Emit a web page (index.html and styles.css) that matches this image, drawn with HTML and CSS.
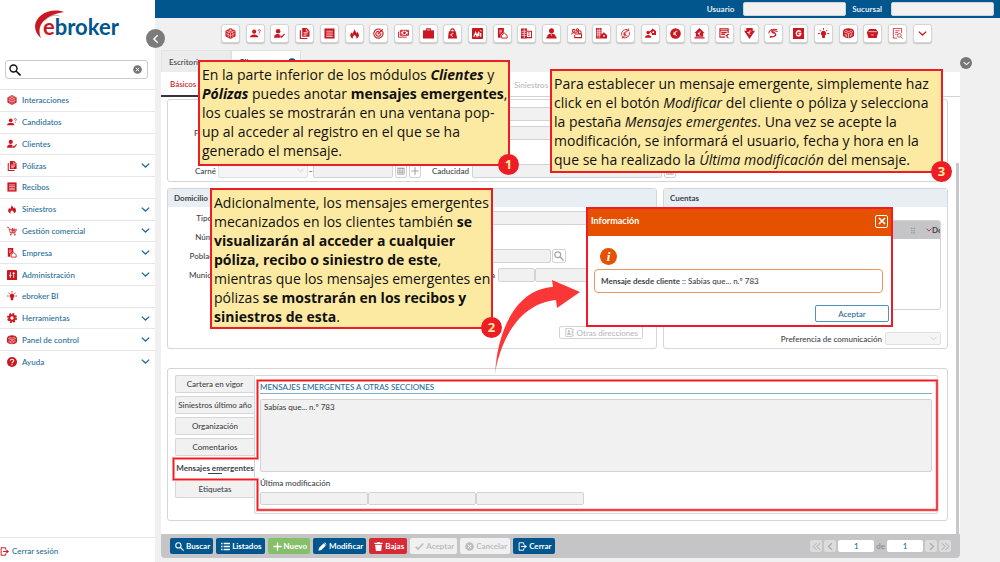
FILE: index.html
```html
<!DOCTYPE html>
<html lang="es">
<head>
<meta charset="utf-8">
<title>ebroker - Clientes</title>
<link rel="stylesheet" href="styles.css">
</head>
<body>
<svg class="sprite" aria-hidden="true">
  <defs>
    <symbol id="i-mesh" viewBox="0 0 24 24"><path fill="currentColor" d="M12 0l11 6v12l-11 6-11-6V6z"/><path fill="none" stroke="#fff" stroke-width="1.100" d="M2 6l10 5 10-5M12 11v12M7 3.500l10 5v12M17 3.500l-10 5v12M2 12l10 5 10-5M12 1v4"/></symbol>
    <symbol id="i-userq" viewBox="0 0 24 24"><circle cx="9" cy="8" r="4.500" fill="currentColor"/><path fill="currentColor" d="M0 20c0-8 18-8 18 0z"/><path fill="none" stroke="currentColor" stroke-width="1.800" d="M17.500 6.500c0-4 5-3.500 5-.5 0 2-2.500 2-2.500 4.500M20 12v2"/></symbol>
    <symbol id="i-usercheck" viewBox="0 0 24 24"><circle cx="9" cy="7" r="5" fill="currentColor"/><path fill="currentColor" d="M0 21c0-9 10-9 14-6l-2 2 3 4z"/><path fill="none" stroke="currentColor" stroke-width="2.600" d="M14 17l3 3 6-7"/></symbol>
    <symbol id="i-docs" viewBox="0 0 24 24"><path fill="currentColor" d="M7 0h10l6 6v13H7z"/><path fill="none" stroke="currentColor" stroke-width="2.500" d="M3 5v18h15"/><path fill="none" stroke="#fff" stroke-width="1.500" d="M10 10h9M10 13h9M10 16h6M16 2v5h5"/></symbol>
    <symbol id="i-receipt" viewBox="0 0 24 24"><path fill="currentColor" d="M1 1h22v22H1z"/><path stroke="#fff" stroke-width="1.500" d="M5 7h14M5 11h14M5 15h14M5 18.500h14"/></symbol>
    <symbol id="i-fire" viewBox="0 0 24 24"><path fill="currentColor" d="M11 1c1 5 5 6 5 10 1-1 2-2 2-3 6 7 4 13-2 15 1-4-1-6-4-8-3 2-5 5-3 8-7-2-8-9-3-14 0 2 1 3 2 3 1-4 4-6 3-11z"/></symbol>
    <symbol id="i-target" viewBox="0 0 24 24"><g fill="none" stroke="currentColor" stroke-width="2.400"><path d="M16 3A10 10 0 1 0 21 8"/><path d="M14 7.500A5.500 5.500 0 1 0 17 11"/><path d="M12 12l9-9M17 3v4h5"/></g><circle cx="12" cy="12" r="2" fill="currentColor"/></symbol>
    <symbol id="i-money" viewBox="0 0 24 24"><path fill="none" stroke="currentColor" stroke-width="2" d="M5 5h18v11H5zM1 8v12h18M9 5v3H5M19 5v3h4M9 16v-3H5M19 16v-3h4"/><circle cx="14" cy="10.500" r="3" fill="currentColor"/></symbol>
    <symbol id="i-case" viewBox="0 0 24 24"><path fill="currentColor" d="M0 5h24v18H0z"/><path fill="none" stroke="currentColor" stroke-width="2.500" d="M8 6V2h8v4"/></symbol>
    <symbol id="i-bag" viewBox="0 0 24 24"><path fill="currentColor" d="M4 7h15l3 16H2z"/><path fill="none" stroke="currentColor" stroke-width="2.500" d="M8 8c0-8 8-8 8 0"/><path fill="none" stroke="#fff" stroke-width="1.500" d="M14 12c-5-3-7 6-1 7M7 15h5"/></symbol>
    <symbol id="i-mi" viewBox="0 0 24 24"><rect x="0" y="0" width="24" height="24" rx="2" fill="currentColor"/><path fill="none" stroke="#fff" stroke-width="2.600" d="M4 19l4-9 3 8 4-10v10M19 11v8M18 6h3"/></symbol>
    <symbol id="i-dochome" viewBox="0 0 24 24"><path fill="currentColor" d="M2 0h13v10l-7 5v6H2z"/><path fill="#fff" stroke="currentColor" stroke-width="2" d="M10 16l6-5 6 5v6H10z"/><path stroke="#fff" stroke-width="1.300" d="M5 5h6M5 8h6M5 11h4"/></symbol>
    <symbol id="i-building" viewBox="0 0 24 24"><path fill="currentColor" d="M0 1h13v22H0z"/><path fill="none" stroke="currentColor" stroke-width="2.200" d="M12 7h11v14H12M15 11h4M15 16h4"/><path stroke="#fff" stroke-width="1.500" d="M1 7h11M1 11.500h11M1 16h11M7 2v20"/></symbol>
    <symbol id="i-desk" viewBox="0 0 24 24"><circle cx="12" cy="6" r="5.500" fill="currentColor"/><path fill="currentColor" d="M3 18c0-8 18-8 18 0v1h2v4H1v-4h2z"/><path stroke="#fff" stroke-width="1.200" d="M12 13v4"/></symbol>
    <symbol id="i-group" viewBox="0 0 24 24"><g fill="none" stroke="currentColor" stroke-width="2.200"><circle cx="6" cy="6" r="3"/><circle cx="14" cy="4" r="2.500"/><circle cx="19" cy="9" r="3"/><path d="M1 14c1-5 8-5 9 0M10 11c2-4 5-3 6-1M11 13h12v8H8v-6"/></g></symbol>
    <symbol id="i-bldhome" viewBox="0 0 24 24"><path fill="currentColor" d="M0 0h12v23H0zM11 15l6-6 7 6v8H11z"/><path stroke="#fff" stroke-width="1.400" d="M1 6h10M1 10.500h10M1 15h9M4 1v20M8 1v20"/><circle cx="17.500" cy="17" r="2" fill="#fff"/></symbol>
    <symbol id="i-cycle" viewBox="0 0 24 24"><g fill="none" stroke="currentColor" stroke-width="1.800"><path d="M4 17A10 10 0 0 1 19 5M20 8A10 10 0 0 1 5 20M19 1v5h-5M5 23v-4h5M16 8c-5-2-7 3-6 8M7 11h7M7 14h6M9 17h7"/></g></symbol>
    <symbol id="i-userhome" viewBox="0 0 24 24"><circle cx="7" cy="10" r="4" fill="currentColor"/><path fill="currentColor" d="M0 21c0-8 14-8 14 0zM10 8l7-7 7 6v8h-9c0-3-1-4-2-5z"/><circle cx="18" cy="9" r="2" fill="#fff"/></symbol>
    <symbol id="i-euro" viewBox="0 0 24 24"><circle cx="12" cy="12" r="11.500" fill="currentColor"/><path fill="none" stroke="#fff" stroke-width="2" d="M16 8c-5-4-9 7-1 9M7 11h6M7 14h5"/></symbol>
    <symbol id="i-homeeuro" viewBox="0 0 24 24"><path fill="currentColor" d="M12 0l11 11h-3v8H4v-8H1zM1 20h22v3H1z"/><path fill="none" stroke="#fff" stroke-width="1.600" d="M15 9c-5-3-7 6-1 8M8 12h5"/></symbol>
    <symbol id="i-list" viewBox="0 0 24 24"><path fill="none" stroke="currentColor" stroke-width="2.400" d="M13 20H2V2h18v9M2 6h18M5 10h12M5 14h8M22 14c-5-2-7 6-1 8M14 17h5"/></symbol>
    <symbol id="i-gem" viewBox="0 0 24 24"><path fill="currentColor" d="M5 0h14v6h5L12 24 0 6h5z"/><path fill="none" stroke="#fff" stroke-width="1.800" d="M16 7c-6-3-8 6-2 7M7 10h6"/></symbol>
    <symbol id="i-swirl" viewBox="0 0 24 24"><path fill="none" stroke="currentColor" stroke-width="2.200" d="M20 4C9 0 4 9 12 11s8 8-8 9M21 8C11 3 8 8 13 10c8 3 1 12-9 8M2 12c0-5 4-8 7-9"/></symbol>
    <symbol id="i-g" viewBox="0 0 24 24"><path fill="currentColor" d="M0 0h24v24H0z"/><path fill="none" stroke="#fff" stroke-width="3" d="M17 8c-6-5-12 2-9 7 3 4 9 2 9-3h-5"/></symbol>
    <symbol id="i-bulb" viewBox="0 0 24 24"><path fill="currentColor" d="M12 6a6 6 0 0 0-3 11v5h6v-5a6 6 0 0 0-3-11z"/><path stroke="currentColor" stroke-width="2" d="M12 0v4M4 4l2 3M20 4l-2 3M0 12h4M20 12h4"/></symbol>
    <symbol id="i-box" viewBox="0 0 24 24"><path fill="currentColor" d="M0 6c5-7 19-7 24 0v11c-5 7-19 7-24 0z"/><path fill="none" stroke="#fff" stroke-width="1.400" d="M2 8l10 4 10-4M12 12v10M5 5l7 3 7-3M5 13v5M8 14v6M16 14v5M19 12v5"/></symbol>
    <symbol id="i-drawer" viewBox="0 0 24 24"><path fill="currentColor" d="M5 2h14l5 6v3l-3 11H3L0 11V8z"/><path fill="none" stroke="#fff" stroke-width="1.500" d="M3 8h18M9 14c1 2 5 2 6 0"/></symbol>
    <symbol id="i-docsearch" viewBox="0 0 24 24"><g fill="none" stroke="currentColor" stroke-width="1.700"><path d="M11 22H3V1h18v10M7 6h10M7 10h6M7 14h3"/><circle cx="16" cy="16" r="4"/><path d="M19 19l4 4"/></g></symbol>
    <symbol id="i-down" viewBox="0 0 24 24"><path fill="none" stroke="currentColor" stroke-width="3.500" d="M2 7l10 9 10-9"/></symbol>
    <symbol id="i-left" viewBox="0 0 24 24"><path fill="none" stroke="currentColor" stroke-width="3.500" d="M16 3l-9 9 9 9"/></symbol>
    <symbol id="i-right" viewBox="0 0 24 24"><path fill="none" stroke="currentColor" stroke-width="3.500" d="M8 3l9 9-9 9"/></symbol>
    <symbol id="i-first" viewBox="0 0 24 24"><path fill="none" stroke="currentColor" stroke-width="2.500" d="M12 3l-9 9 9 9M22 3l-9 9 9 9"/></symbol>
    <symbol id="i-last" viewBox="0 0 24 24"><path fill="none" stroke="currentColor" stroke-width="2.500" d="M12 3l9 9-9 9M2 3l9 9-9 9"/></symbol>
    <symbol id="i-cart" viewBox="0 0 24 24"><path fill="none" stroke="currentColor" stroke-width="1.800" d="M0 3h4l4 14h12M6 8h17l-3 7H8M10 11h10M13 5v9M17 6v9"/><circle cx="9" cy="21" r="2" fill="currentColor"/><circle cx="19" cy="21" r="2" fill="currentColor"/></symbol>
    <symbol id="i-admin" viewBox="0 0 24 24"><rect x="0" y="0" width="24" height="24" rx="1" fill="currentColor"/><path fill="none" stroke="#fff" stroke-width="2" d="M8 5v14M16 5v14M5 13h6M13 8h6"/></symbol>
    <symbol id="i-gear" viewBox="0 0 24 24"><circle cx="12" cy="12" r="6.500" fill="none" stroke="currentColor" stroke-width="5"/><circle cx="12" cy="12" r="10" fill="none" stroke="currentColor" stroke-width="4" stroke-dasharray="4.500 3.350"/></symbol>
    <symbol id="i-help" viewBox="0 0 24 24"><circle cx="12" cy="12" r="12" fill="currentColor"/><path fill="none" stroke="#fff" stroke-width="2.500" d="M8 9c0-5 8-4 8 0 0 3-4 3-4 6M12 17v2.500"/></symbol>
    <symbol id="i-search" viewBox="0 0 24 24"><circle cx="9" cy="9" r="7" fill="none" stroke="currentColor" stroke-width="2.800"/><path stroke="currentColor" stroke-width="3.200" d="M14 14l9 9"/></symbol>
    <symbol id="i-xcircle" viewBox="0 0 24 24"><circle cx="12" cy="12" r="11.500" fill="currentColor"/><path stroke="#fff" stroke-width="2.600" d="M7.500 7.500l9 9M16.500 7.500l-9 9"/></symbol>
    <symbol id="i-exit" viewBox="0 0 24 24"><path fill="none" stroke="currentColor" stroke-width="2.500" d="M15 7V2H3v20h12v-5M8 12h11"/><path fill="currentColor" d="M17 6l7 6-7 6z"/></symbol>
    <symbol id="i-menu" viewBox="0 0 24 24"><path stroke="currentColor" stroke-width="4" d="M0 4h4M7 4h17M0 12h4M7 12h17M0 20h4M7 20h17"/></symbol>
    <symbol id="i-plus" viewBox="0 0 24 24"><path stroke="currentColor" stroke-width="3.500" d="M12 1v22M1 12h22"/></symbol>
    <symbol id="i-pencil" viewBox="0 0 24 24"><path fill="currentColor" d="M1 23l2-8L15 3l6 6L9 21zM16 2c2-2 8 3 6 6z"/></symbol>
    <symbol id="i-trash" viewBox="0 0 24 24"><path fill="currentColor" d="M1 2h7l1-2h6l1 2h7v3H1zM3 7h18l-2 17H5z"/></symbol>
    <symbol id="i-check" viewBox="0 0 24 24"><path fill="none" stroke="currentColor" stroke-width="4.500" d="M2 13l6 6L22 4"/></symbol>
    <symbol id="i-x" viewBox="0 0 24 24"><path stroke="currentColor" stroke-width="5" d="M3 3l18 18M21 3L3 21"/></symbol>
    <symbol id="i-cal" viewBox="0 0 24 24"><path fill="currentColor" d="M1 2h22v5H1z"/><path fill="none" stroke="currentColor" stroke-width="2" d="M2 6v16h20V6M2 12h20M2 17h20M7 8v14M12 8v14M17 8v14"/></symbol>
    <symbol id="i-book" viewBox="0 0 24 24"><path fill="none" stroke="currentColor" stroke-width="2" d="M2 1h17v22H2zM22 3v4M22 10v4M22 17v4"/><circle cx="10" cy="9" r="3" fill="currentColor"/><path fill="currentColor" d="M5 18c0-6 11-6 11 0z"/></symbol>
    <symbol id="i-dots" viewBox="0 0 24 24"><path stroke="currentColor" stroke-width="5" d="M4 3h6M14 3h6M4 12h6M14 12h6M4 21h6M14 21h6"/></symbol>
  </defs>
</svg>

<div class="app">
  <aside class="sidebar">
    <div class="logo">
      <svg class="swoosh" viewBox="0 0 32 30" aria-hidden="true"><path fill="#b9b5b0" d="M8 9C14 3 23 3 30 9c-5-4-14-5-20 2z"/><path fill="#cb1820" d="M29 2C15-3 1 5 0 16c0 5 2 9 6 12C1 17 8 5 29 2z"/></svg>
      <span class="brand"><span class="brand-e">e</span>broker</span>
    </div>
    <label class="search"><svg><use href="#i-search"/></svg><input type="text" aria-label="Buscar en el menú"><svg class="clear"><use href="#i-xcircle"/></svg></label>
    <nav class="menu">
      <a href="#"><svg><use href="#i-mesh"/></svg><span>Interacciones</span></a>
      <a href="#"><svg><use href="#i-userq"/></svg><span>Candidatos</span></a>
      <a href="#"><svg><use href="#i-usercheck"/></svg><span>Clientes</span></a>
      <a href="#"><svg><use href="#i-docs"/></svg><span>Pólizas</span><svg class="chev"><use href="#i-down"/></svg></a>
      <a href="#"><svg><use href="#i-receipt"/></svg><span>Recibos</span></a>
      <a href="#"><svg><use href="#i-fire"/></svg><span>Siniestros</span><svg class="chev"><use href="#i-down"/></svg></a>
      <a href="#"><svg><use href="#i-cart"/></svg><span>Gestión comercial</span><svg class="chev"><use href="#i-down"/></svg></a>
      <a href="#"><svg><use href="#i-dochome"/></svg><span>Empresa</span><svg class="chev"><use href="#i-down"/></svg></a>
      <a href="#"><svg><use href="#i-admin"/></svg><span>Administración</span><svg class="chev"><use href="#i-down"/></svg></a>
      <a href="#"><svg><use href="#i-bulb"/></svg><span>ebroker BI</span></a>
      <a href="#"><svg><use href="#i-gear"/></svg><span>Herramientas</span><svg class="chev"><use href="#i-down"/></svg></a>
      <a href="#"><svg><use href="#i-box"/></svg><span>Panel de control</span><svg class="chev"><use href="#i-down"/></svg></a>
      <a href="#"><svg><use href="#i-help"/></svg><span>Ayuda</span><svg class="chev"><use href="#i-down"/></svg></a>
    </nav>
    <a class="logout" href="#"><svg><use href="#i-exit"/></svg>Cerrar sesión</a>
    <button class="collapse" aria-label="Contraer menú"><svg><use href="#i-left"/></svg></button>
  </aside>

  <main class="main">
    <header class="topbar">
      <label for="usuario">Usuario</label><input id="usuario" type="text">
      <label for="sucursal">Sucursal</label><input id="sucursal" type="text">
    </header>
    <div class="toolbar">
      <button aria-label="Interacciones"><svg><use href="#i-mesh"/></svg></button>
      <button aria-label="Candidatos"><svg><use href="#i-userq"/></svg></button>
      <button aria-label="Clientes"><svg><use href="#i-usercheck"/></svg></button>
      <button aria-label="Pólizas"><svg><use href="#i-docs"/></svg></button>
      <button aria-label="Recibos"><svg><use href="#i-receipt"/></svg></button>
      <button aria-label="Siniestros"><svg><use href="#i-fire"/></svg></button>
      <button aria-label="Objetivos"><svg><use href="#i-target"/></svg></button>
      <button aria-label="Caja"><svg><use href="#i-money"/></svg></button>
      <button aria-label="Cartera"><svg><use href="#i-case"/></svg></button>
      <button aria-label="Compras"><svg><use href="#i-bag"/></svg></button>
      <button aria-label="Mi"><svg><use href="#i-mi"/></svg></button>
      <button aria-label="Empresa"><svg><use href="#i-dochome"/></svg></button>
      <button aria-label="Compañías"><svg><use href="#i-building"/></svg></button>
      <button aria-label="Colaboradores"><svg><use href="#i-desk"/></svg></button>
      <button aria-label="Grupos"><svg><use href="#i-group"/></svg></button>
      <button aria-label="Sucursales"><svg><use href="#i-bldhome"/></svg></button>
      <button aria-label="Liquidaciones"><svg><use href="#i-cycle"/></svg></button>
      <button aria-label="Comisiones"><svg><use href="#i-userhome"/></svg></button>
      <button aria-label="Cobros"><svg><use href="#i-euro"/></svg></button>
      <button aria-label="Pagos"><svg><use href="#i-homeeuro"/></svg></button>
      <button aria-label="Facturas"><svg><use href="#i-list"/></svg></button>
      <button aria-label="Gastos"><svg><use href="#i-gem"/></svg></button>
      <button aria-label="Suplementos"><svg><use href="#i-swirl"/></svg></button>
      <button aria-label="Gestor"><svg><use href="#i-g"/></svg></button>
      <button aria-label="ebroker BI"><svg><use href="#i-bulb"/></svg></button>
      <button aria-label="Panel de control"><svg><use href="#i-box"/></svg></button>
      <button aria-label="Archivo"><svg><use href="#i-drawer"/></svg></button>
      <button aria-label="Consultas"><svg><use href="#i-docsearch"/></svg></button>
      <button aria-label="Más"><svg><use href="#i-down"/></svg></button>
    </div>

    <div class="workspace">
      <div class="tabs">
        <button class="tab">Escritorio</button>
        <button class="tab tab-on">Clientes<svg><use href="#i-xcircle"/></svg></button>
      </div>
      <button class="expand" aria-label="Desplegar"><svg><use href="#i-down"/></svg></button>
      <div class="sheet">
        <div class="subtabs"><button class="subtab subtab-on">Básicos</button><button class="subtab subtab-off">Siniestros</button></div>
        <div class="content">
          <section class="card personal">
            <div class="row first"><input type="text" aria-label="Nombre" disabled></div>
            <div class="row"><label for="fnac">F. nac.</label><input id="fnac" type="text" disabled></div>
            <div class="row"></div>
            <div class="row">
              <label for="carne">Carné</label>
              <select id="carne" class="w-carne" disabled><option></option></select><span class="dash">–</span>
              <input class="w-date" type="text" aria-label="Fecha del carné" disabled>
              <button class="mini" aria-label="Calendario" disabled><svg><use href="#i-cal"/></svg></button>
              <button class="mini" aria-label="Añadir" disabled><svg><use href="#i-plus"/></svg></button>
              <label class="auto" for="cad">Caducidad</label><input id="cad" class="w-cad" type="text" disabled>
              <button class="mini" aria-label="Calendario de caducidad" disabled><svg><use href="#i-cal"/></svg></button>
            </div>
          </section>

          <div class="pair">
            <section class="card address">
              <h2>Domicilio</h2>
              <div class="fields">
                <div class="row"><label for="via">Tipo vía</label><input id="via" type="text" disabled></div>
                <div class="row"><label>Número</label></div>
                <div class="row"><label for="pob">Población</label><input id="pob" type="text" disabled><button class="mini look" aria-label="Buscar población" disabled><svg><use href="#i-search"/></svg></button></div>
                <div class="row"><label for="mun">Municipio</label><input id="mun" type="text" disabled><label class="auto" for="prov">Provincia</label><input id="prov" class="w-prov" type="text" disabled><input class="w-provname" type="text" aria-label="Nombre de provincia" disabled></div>
                <div class="row"><label>C.P.</label></div>
                <div class="row"><label>País</label></div>
                <div class="row end"><button class="other" disabled><svg><use href="#i-book"/></svg>Otras direcciones</button></div>
              </div>
            </section>
            <section class="card accounts">
              <h2>Cuentas</h2>
              <div class="grid-box">
                <div class="grid-head"><svg class="dots"><use href="#i-dots"/></svg><svg class="sort"><use href="#i-down"/></svg><span>Do</span></div>
              </div>
              <div class="pref"><label for="pref">Preferencia de comunicación</label><select id="pref" disabled><option></option></select></div>
            </section>
          </div>

          <section class="card lower">
            <div class="vtabs">
              <button>Cartera en vigor</button>
              <button>Siniestros último año</button>
              <button>Organización</button>
              <button>Comentarios</button>
              <button class="vtab-on">Mensajes emergentes</button>
              <button>Etiquetas</button>
            </div>
            <div class="pane">
              <h3>MENSAJES EMERGENTES A OTRAS SECCIONES</h3>
              <textarea aria-label="Mensaje emergente" readonly>Sabías que... n.º 783</textarea>
              <label for="ultima">Última modificación</label>
              <div class="mods"><input id="ultima" type="text" disabled><input type="text" aria-label="Fecha" disabled><input type="text" aria-label="Hora" disabled></div>
            </div>
          </section>
          <div class="scrollbar"></div>
        </div>
        <footer class="actions">
          <button class="blue"><svg><use href="#i-search"/></svg>Buscar</button>
          <button class="blue"><svg><use href="#i-menu"/></svg>Listados</button>
          <button class="green"><svg><use href="#i-plus"/></svg>Nuevo</button>
          <button class="blue"><svg><use href="#i-pencil"/></svg>Modificar</button>
          <button class="red"><svg><use href="#i-trash"/></svg>Bajas</button>
          <button class="off" disabled><svg><use href="#i-check"/></svg>Aceptar</button>
          <button class="off" disabled><svg><use href="#i-xcircle"/></svg>Cancelar</button>
          <button class="blue"><svg><use href="#i-exit"/></svg>Cerrar</button>
          <div class="pager">
            <button aria-label="Primero"><svg><use href="#i-first"/></svg></button>
            <button aria-label="Anterior"><svg><use href="#i-left"/></svg></button>
            <input type="text" value="1" aria-label="Registro"><span>de</span><input type="text" value="1" aria-label="Total">
            <button aria-label="Siguiente"><svg><use href="#i-right"/></svg></button>
            <button aria-label="Último"><svg><use href="#i-last"/></svg></button>
          </div>
        </footer>
      </div>
    </div>
  </main>

  <svg class="marks" width="1000" height="562" viewBox="0 0 1000 562" aria-hidden="true">
    <defs><linearGradient id="tail" x1="0" y1="0" x2="0" y2="1"><stop offset="0.800" stop-color="#fb3637"/><stop offset="1" stop-color="#fb3637" stop-opacity="0.500"/></linearGradient></defs>
    <path fill="none" stroke="#ffb3b3" stroke-width="3" d="M257.500 380.500H937V510H257.500V479.500H173.500V458.500H257.500Z"/>
    <path fill="none" stroke="#ee1c25" stroke-width="1.500" d="M257.500 380.500H937V510H257.500V479.500H173.500V458.500H257.500Z"/>
    <path fill="url(#tail)" d="M495 374C497 333 515 289 553 287L552 280L580 292L557 308L556 300C524 303 502 332 495 374Z"/>
  </svg>

  <div class="callout c1">En la parte inferior de los módulos <b><i>Clientes</i></b> y<br><b><i>Pólizas</i></b> puedes anotar <b>mensajes emergentes</b>,<br>los cuales se mostrarán en una ventana pop-<br>up al acceder al registro en el que se ha<br>generado el mensaje.<span class="badge">1</span></div>
  <div class="callout c2">Adicionalmente, los mensajes emergentes<br>mecanizados en los clientes también <b>se<br>visualizarán al acceder a cualquier<br>póliza, recibo o siniestro de este</b>,<br>mientras que los mensajes emergentes en<br>pólizas <b>se mostrarán en los recibos y<br>siniestros de esta</b>.<span class="badge">2</span></div>
  <div class="callout c3">Para establecer un mensaje emergente, simplemente haz<br>click en el botón <i>Modificar</i> del cliente o póliza y selecciona<br>la pestaña <i>Mensajes emergentes</i>. Una vez se acepte la<br>modificación, se informará el usuario, fecha y hora en la<br>que se ha realizado la <i>Última modificación</i> del mensaje.<span class="badge">3</span></div>

  <div class="modal" role="dialog" aria-labelledby="modal-title">
    <div class="modal-head"><span id="modal-title">Información</span><button aria-label="Cerrar"><svg><use href="#i-x"/></svg></button></div>
    <div class="modal-body">
      <span class="info">i</span>
      <p><b>Mensaje desde cliente</b> :: Sabías que... n.º 783</p>
      <button>Aceptar</button>
    </div>
  </div>
</div>
</body>
</html>
```
FILE: styles.css
```css
* { box-sizing: border-box; }

body {
  margin: 0;
  background: #f0f0f0;
  color: #3d4348;
  font: 500 8px/10px Lato, "Open Sans", sans-serif;
}

button, input, select, textarea { font: inherit; color: inherit; margin: 0; padding: 0; }
button { border: 0; background: none; }
a { text-decoration: none; }
.sprite { position: absolute; width: 0; height: 0; }

input, select, textarea {
  border: 1px solid #d3d3d5;
  border-radius: 2px;
  background: #f1f1f1;
  min-width: 0;
}

.app { position: relative; display: flex; min-height: 100vh; }

/* Sidebar */
.sidebar {
  position: relative;
  width: 155px;
  flex: none;
  display: flex;
  flex-direction: column;
  background: #fff;
}
.logo { display: flex; height: 60px; padding: 10px 0 0 35px; }
.swoosh { width: 32px; height: 30px; flex: none; }
.brand {
  margin: 4px 0 0 -24px;
  color: #00568d;
  font: 700 22px/26px Lato, sans-serif;
}
.brand-e { color: #cb1820; }
.search {
  display: flex;
  align-items: center;
  height: 19px;
  margin: 0 7px 10px 5px;
  padding: 0 5px 0 3px;
  border: 1px solid #ccc;
  border-radius: 3px;
  color: #111;
}
.search svg { width: 12px; height: 12px; flex: none; }
.search .clear { width: 9px; height: 9px; color: #777; }
.search input { flex: 1; border: 0; background: none; }
.menu { display: grid; grid-auto-rows: 1fr; height: 283px; }
.menu a {
  display: flex;
  align-items: center;
  gap: 5px;
  padding: 0 5px 0 7px;
  border-top: 1px solid #e6e6e6;
  color: #1f6c99;
}
.menu svg { width: 10px; height: 10px; color: #cb1820; }
.menu span { flex: 1; }
.menu .chev { width: 9px; height: 9px; color: #1f6c99; }
.logout {
  display: flex;
  align-items: center;
  gap: 3px;
  height: 25px;
  margin-top: auto;
  padding-top: 2px;
  border-top: 1px solid #e6e6e6;
  color: #1f6c99;
}
.logout svg { width: 9px; height: 9px; color: #cb1820; }
.collapse {
  position: absolute;
  top: 29px;
  right: -10px;
  display: grid;
  place-items: center;
  width: 19px;
  height: 19px;
  border-radius: 50%;
  background: #7b7b7b;
  color: #fff;
}
.collapse svg { width: 10px; height: 10px; }

/* Header */
.main { flex: 1; min-width: 0; display: flex; flex-direction: column; }
.topbar {
  display: flex;
  align-items: center;
  justify-content: flex-end;
  height: 18px;
  padding: 0 6px 1px;
  background: #00568d;
  color: #e3edf4;
  font-weight: 700;
}
.topbar input { width: 103px; height: 14px; margin-left: 9px; background: #f1f1f1; }
.topbar input + label { margin-left: 6px; }
.toolbar {
  display: flex;
  justify-content: space-between;
  height: 32px;
  padding: 6px 68px 0 66px;
}
.toolbar button {
  display: grid;
  place-items: center;
  width: 19px;
  height: 19px;
  border: 1px solid #d5d5d5;
  border-radius: 3px;
  background: #fff;
  box-shadow: 0 1px 1px #c4c4c4;
  color: #cb1820;
}
.toolbar svg { width: 11px; height: 11px; }
.toolbar button:last-child svg { width: 9px; height: 9px; }

/* Workspace */
.workspace {
  position: relative;
  flex: 1;
  display: flex;
  flex-direction: column;
  padding: 0 40px 4px 6px;
}
.tabs { display: flex; height: 22px; }
.tab { width: 70px; border: 1px solid #e2e2e2; border-bottom: 0; background: #ececec; text-align: left; padding-left: 7px; }
.tab-on { display: flex; align-items: center; justify-content: space-between; padding-right: 4px; background: #fff; font-weight: 700; }
.tab-on svg { width: 8px; height: 8px; color: #00568d; }
.expand {
  position: absolute;
  top: 7px;
  right: 28px;
  display: grid;
  place-items: center;
  width: 12px;
  height: 12px;
  border-radius: 50%;
  background: #777;
  color: #fff;
}
.expand svg { width: 7px; height: 7px; }
.sheet { flex: 1; display: flex; flex-direction: column; background: #fff; border-radius: 0 0 4px 4px; }
.subtabs { display: flex; height: 25px; border-bottom: 1px solid #d3d3d5; }
.subtab { padding: 0 9px; height: 25px; }
.subtab-on { width: 80px; text-align: left; border-bottom: 2px solid #33373b; color: #cb1820; }
.subtab-off { margin-left: 264px; color: #b9b9b9; }
.content { position: relative; flex: 1; padding: 2px 12px 13px 6px; }
.scrollbar { position: absolute; top: 66px; right: 1px; bottom: 0; width: 3px; background: #c8c8ca; }

.card { border: 1px solid #d6d6d8; border-radius: 3px; background: #fff; }
.card h2 { margin: 0; padding: 4px 6px; background: #e7eff4; font-size: 8px; line-height: 10px; font-weight: 700; }

.row { display: flex; align-items: center; height: 19px; }
.row label { flex: none; text-align: right; margin-right: 2px; }
.row label.auto { width: auto; margin-left: 11px; margin-right: 3px; }
.row input, .row select { height: 14px; }
.mini {
  display: grid;
  place-items: center;
  width: 12px;
  height: 14px;
  margin-left: 2px;
  border: 1px solid #d3d3d5;
  border-radius: 2px;
  color: #a5a5a5;
}
.mini svg { width: 8px; height: 8px; }

.personal { padding: 4px 0 1px; }
.personal .row label { width: 48px; }
.personal .row label.auto { width: auto; }
.personal .row > input:last-child { width: 444px; }
.personal .first { padding-left: 50px; }
.personal .w-carne { width: 90px; }
.personal .w-date { width: 80px; }
.personal .w-cad { width: 190px; }
.dash { width: 5px; text-align: center; }

select {
  appearance: none;
  background: #f1f1f1 url("data:image/svg+xml,%3Csvg xmlns='http://www.w3.org/2000/svg' viewBox='0 0 24 24'%3E%3Cpath fill='none' stroke='%23b5b5b5' stroke-width='3' d='M2 7l10 9 10-9'/%3E%3C/svg%3E") no-repeat right 3px center / 7px 7px;
}

.pair { display: grid; grid-template-columns: 490fr 285fr; gap: 6px; margin: 6px 0 19px; }
.pair .card { height: 161px; }
.address .fields { padding: 1px 13px 0 0; }
.address .row label { width: 56px; }
.address .row label.auto { width: auto; margin-left: 20px; }
.address .row input { flex: 1; }
.address .row:nth-child(3) { padding-right: 77px; }
.address .row input.w-prov { flex: none; width: 37px; }
.address .row input.w-provname { flex: none; width: 108px; }
.address .look { width: 14px; margin-left: 1px; }
.address .look svg { width: 10px; height: 10px; }
.address .row.end { justify-content: flex-end; padding-top: 2px; }
.other {
  display: flex;
  align-items: center;
  gap: 3px;
  height: 13px;
  padding: 0 4px 0 5px;
  border: 1px solid #d3d3d5;
  border-radius: 2px;
  color: #b9b9b9;
}
.other svg { width: 9px; height: 9px; }

.grid-box { height: 90px; margin: 13px 6px 0; border: 1px solid #d3d3d5; border-radius: 3px; overflow: hidden; }
.grid-head { display: flex; align-items: center; justify-content: flex-end; height: 18px; background: #c5c5c7; font-weight: 700; }
.grid-head span { width: 8px; overflow: hidden; }
.grid-head .dots { width: 6px; height: 7px; margin-right: 10px; color: #999; }
.grid-head .sort { width: 6px; height: 6px; color: #cb1820; }
.pref { display: flex; align-items: center; justify-content: flex-end; gap: 3px; padding: 22px 6px 0; }
.pref select { width: 56px; height: 13px; }

/* Detail block */
.lower { display: flex; align-items: stretch; height: 153px; padding: 6px 9px 6px 7px; }
.vtabs { display: flex; flex-direction: column; gap: 3px; width: 79px; flex: none; }
.vtabs button {
  height: 18px;
  border: 1px solid #d6d6d8;
  border-right: 0;
  border-radius: 2px 0 0 2px;
  background: #f1f1f1;
  white-space: nowrap;
}
.vtabs .vtab-on { background: #fff; border-color: #fff; font-weight: 700; }
.vtab-on::after { content: ""; display: block; width: 14px; height: 1px; margin: 0 auto; background: #3d4348; }
.pane { flex: 1; display: flex; flex-direction: column; padding: 5px 5px 8px; border: 1px solid #d6d6d8; border-radius: 2px; }
.pane h3 { margin: 0 0 5px; border-bottom: 1px solid #7fb0c8; color: #1f6c99; font-size: 8px; font-weight: 500; line-height: 12px; }
.pane textarea { height: 74px; padding: 2px 3px; resize: none; }
.pane label { margin: 6px 0 4px; }
.mods { display: grid; grid-template-columns: repeat(3, 108px); }
.mods input { height: 13px; }

/* Action bar */
.actions {
  display: flex;
  align-items: center;
  gap: 3px;
  height: 24px;
  padding: 0 9px;
  border-radius: 0 0 4px 4px;
  background: #c5c5c7;
}
.actions > button {
  display: flex;
  align-items: center;
  gap: 2px;
  height: 16px;
  padding: 0 3px 0 5px;
  border-radius: 2px;
  color: #fff;
  font-weight: 700;
}
.actions svg { width: 9px; height: 9px; }
.actions .blue { background: #00568d; }
.actions .green { background: #86bf69; }
.actions .red { background: #d82a35; }
.actions .off { background: #f0f0f0; color: #bdbdbd; }
.pager { display: flex; align-items: center; gap: 2px; margin-left: auto; color: #8a8a8a; }
.pager button { display: grid; place-items: center; width: 12px; height: 12px; border-radius: 2px; background: #dcdcdc; color: #aaa; }
.pager input { width: 36px; height: 12px; border: 0; background: #fff; color: #1f6c99; text-align: center; }

/* Guide overlay */
.marks { position: absolute; top: 0; left: 0; pointer-events: none; }
.callout {
  position: absolute;
  border: 2px solid #ee1c25;
  background: #fdeaa2;
  color: #111;
  font: 14px/19px "Open Sans", "Noto Sans", sans-serif;
  white-space: nowrap;
  padding: 3px 2px;
}
.c1 { left: 198px; top: 60px; width: 312px; height: 106px; }
.c2 { left: 210px; top: 188px; width: 283px; height: 141px; }
.c3 { left: 550px; top: 69px; width: 393px; height: 104px; }
.badge {
  position: absolute;
  right: -11px;
  bottom: -11px;
  width: 21px;
  height: 21px;
  border-radius: 50%;
  background: #ee1c25;
  color: #fdeaa2;
  font: 700 13px/21px "Noto Sans", sans-serif;
  text-align: center;
}
.modal {
  position: absolute;
  left: 586px;
  top: 207px;
  width: 307px;
  border: 2px solid #ee1c25;
  background: #fff;
}
.modal-head {
  display: flex;
  align-items: center;
  justify-content: space-between;
  height: 27px;
  padding: 0 3px 3px;
  background: #e65100;
  color: #fff;
  font-size: 9px;
  font-weight: 700;
}
.modal-head button { display: grid; place-items: center; width: 13px; height: 13px; border: 1px solid #fff; border-radius: 2px; }
.modal-head svg { width: 8px; height: 8px; }
.modal-body { display: flex; flex-direction: column; padding: 12px 2px 3px 6px; }
.info {
  width: 17px;
  height: 17px;
  margin-left: 6px;
  border-radius: 50%;
  background: #e65100;
  color: #fff;
  font: italic 700 13px/17px "Liberation Serif", serif;
  text-align: center;
}
.modal-body p { margin: 4px 6px 12px 0; padding: 6px; border: 1px solid #f0945f; border-radius: 4px; }
.modal-body button { align-self: flex-end; width: 74px; height: 17px; border: 1px solid #4f93b5; border-radius: 2px; color: #1f6c99; }
```
